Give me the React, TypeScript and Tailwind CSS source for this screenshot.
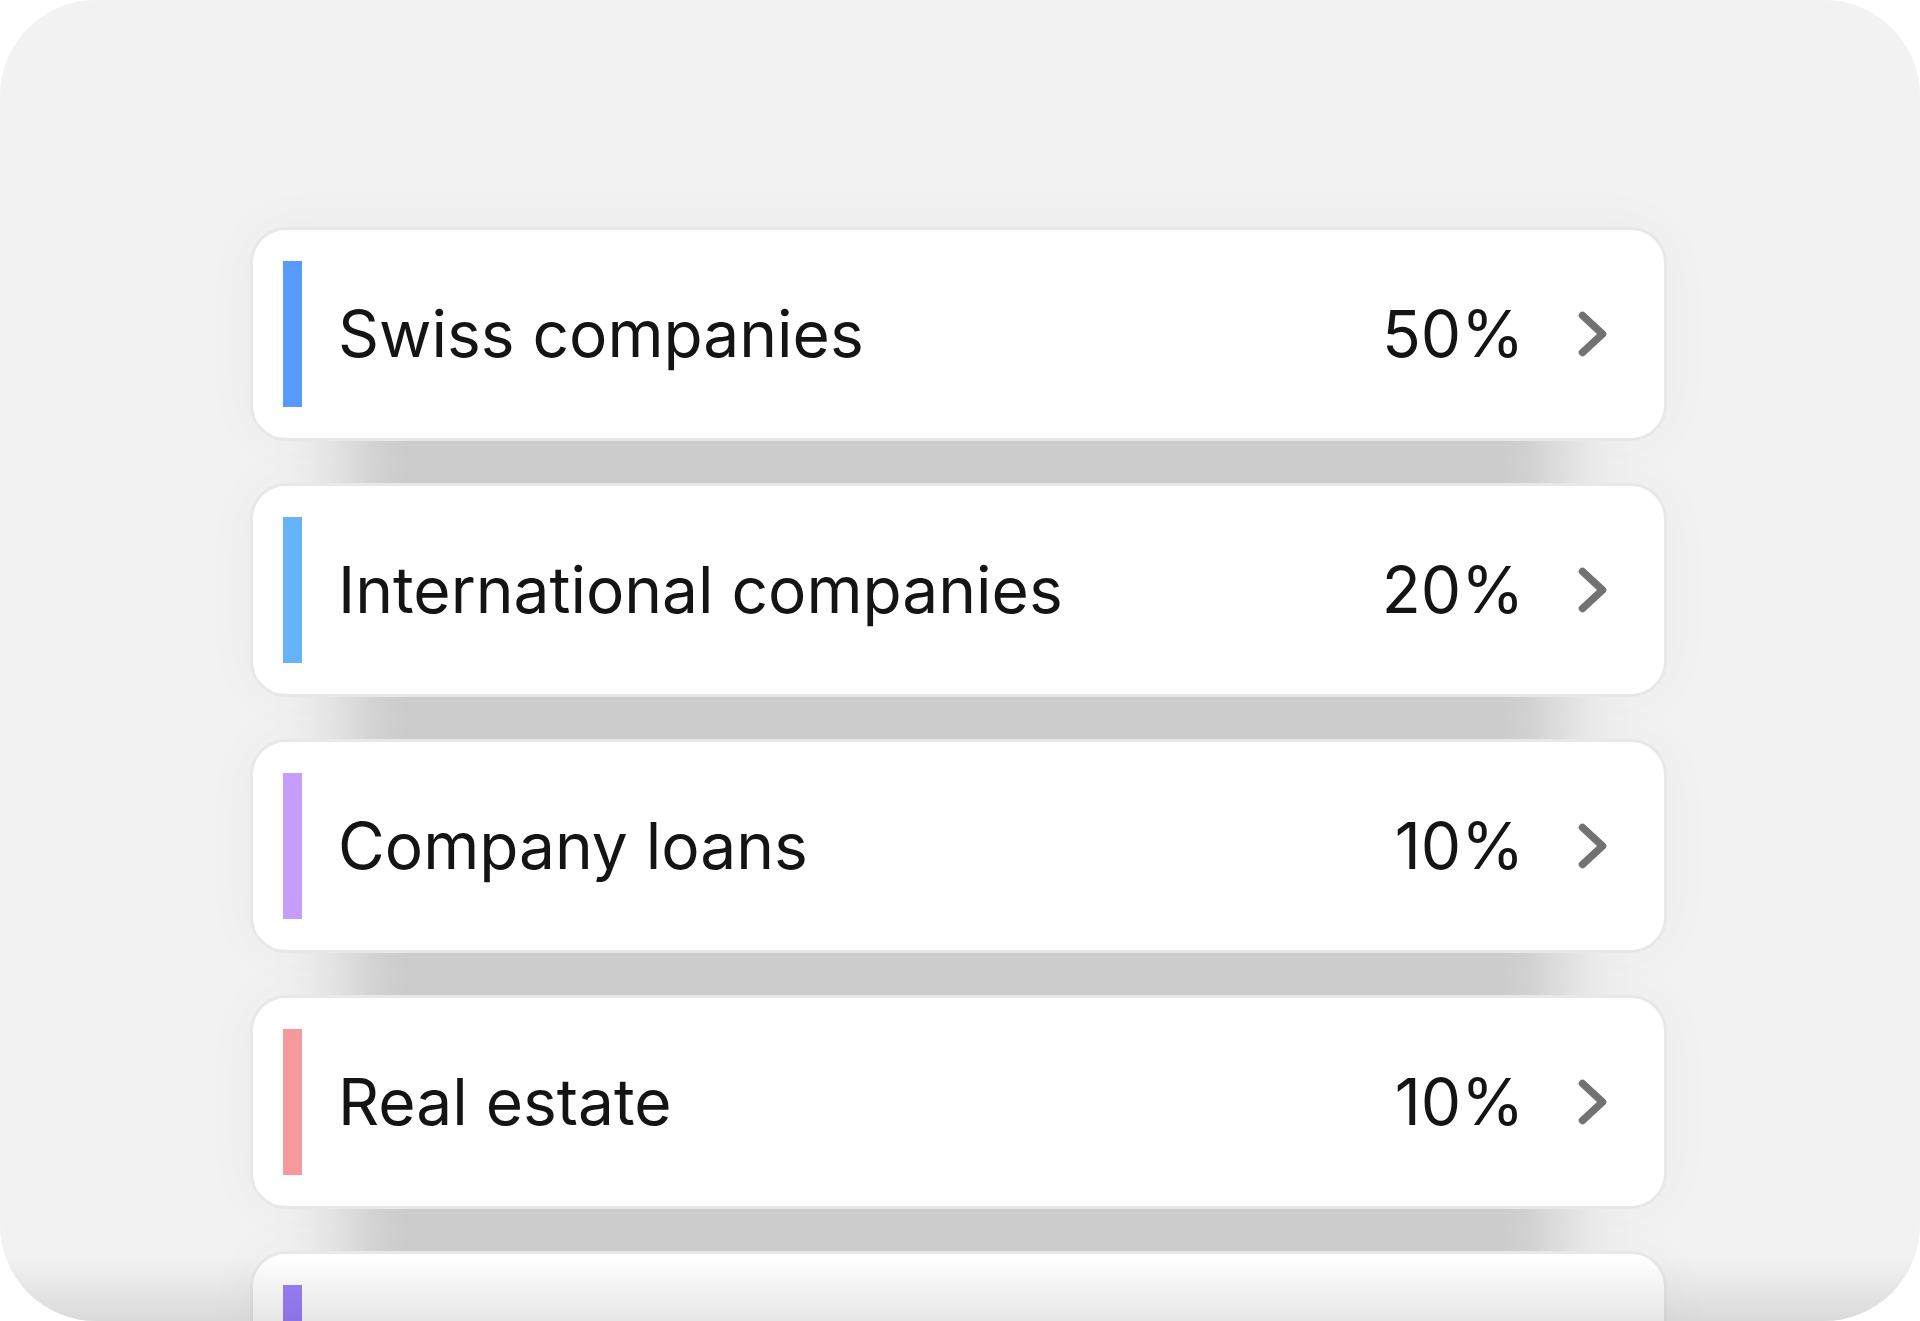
import React from "react";

interface Row {
  label?: string;
  share?: string;
  color: string;
}

// --- allocation rows (the last one is cut off by the frame) ---
const ROWS: Row[] = [
  { label: "Swiss companies", share: "50%", color: "bg-[#589bff]" },
  { label: "International companies", share: "20%", color: "bg-[#66b3fb]" },
  { label: "Company loans", share: "10%", color: "bg-[#c79cff]" },
  { label: "Real estate", share: "10%", color: "bg-[#f5999d]" },
  { color: "bg-[#9b80fd]" },
];

const Chevron = () => (
  <svg width="30" height="46" viewBox="0 0 30 46" fill="none" className="shrink-0">
    <path
      d="M4.5 4.5 L24.5 23 L4.5 41.5"
      stroke="#727272"
      strokeWidth="7.5"
      strokeLinecap="round"
      strokeLinejoin="round"
    />
  </svg>
);

const AllocationRow = ({ item }: { item: Row }) => (
  <div className="relative">
    {/* soft drop shadow that fills the gap below the card */}
    <div className="absolute left-[98px] right-[108px] top-[110px] h-[240px] -z-10 bg-black/[0.145] blur-[34px]" />
    <div className="h-[214px] rounded-[36px] border-[3px] border-[#e8e8e8] bg-white flex items-center pl-[30px] pr-[56px] shadow-[0_0_60px_rgba(0,0,0,0.03)]">
      <span className={`w-[19px] h-[146px] shrink-0 ${item.color}`} />
      {item.label && (
        <>
          <p className="ml-[36px] flex-1 text-[64px] leading-none text-[#141414]">{item.label}</p>
          <p className="text-[64px] leading-none text-[#141414]">{item.share}</p>
          <span className="ml-[54px]">
            <Chevron />
          </span>
        </>
      )}
    </div>
  </div>
);

export default function App() {
  return (
    <div className="w-[1920px] h-[1321px] bg-white font-['Inter','Noto_Sans',sans-serif]">
      <div className="relative w-full h-full rounded-[96px] bg-[#f2f2f2] overflow-hidden">
        <div className="relative isolate ml-[250px] w-[1417px] pt-[227px] flex flex-col gap-[42px]">
          {ROWS.map((item, i) => (
            <AllocationRow key={i} item={item} />
          ))}
        </div>
        {/* bottom fade */}
        <div className="absolute inset-x-0 bottom-0 h-[64px] bg-gradient-to-b from-transparent to-black/[0.1]" />
      </div>
    </div>
  );
}
